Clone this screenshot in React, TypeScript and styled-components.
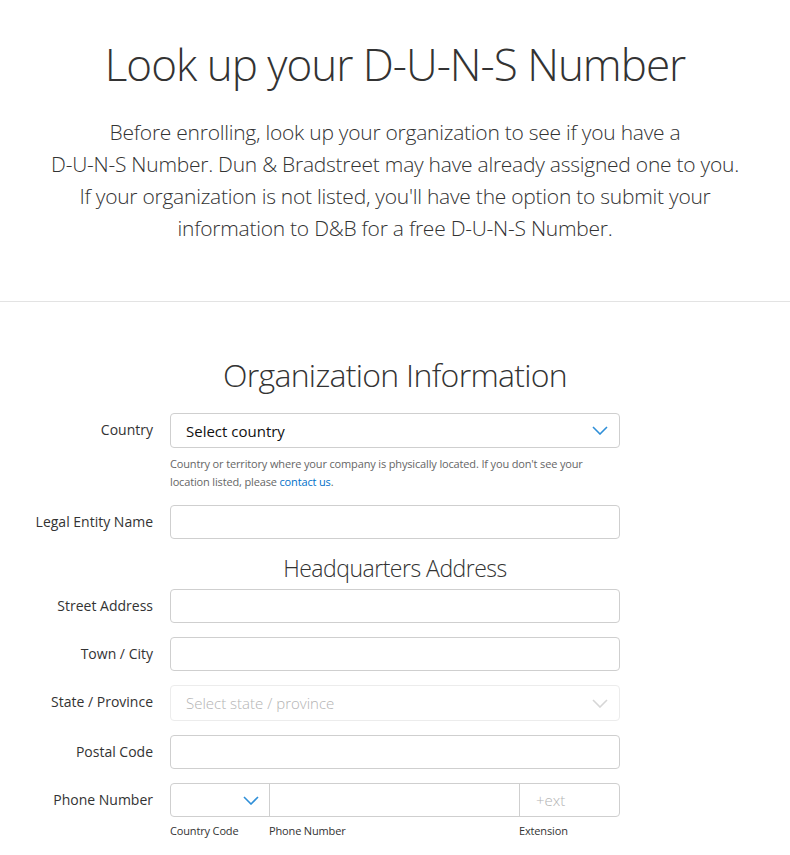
import React from "react"
import styled, { createGlobalStyle } from "styled-components"

const GlobalStyle = createGlobalStyle`
  body {
    margin: 0;
    background: #fff;
    font-family: "Open Sans", "Liberation Sans", sans-serif;
    color: #333;
  }
`

const Page = styled.div`
  width: 790px;
`

const Hero = styled.section`
  padding: 37px 0 57px;
  text-align: center;
  border-bottom: 1px solid #e3e3e3;
`

const Title = styled.h1`
  margin: 0;
  font-size: 44px;
  font-weight: 300;
  line-height: 54px;
  color: #333;
  letter-spacing: -1px;
`

const Intro = styled.p`
  margin: 25px 0 0;
  font-size: 21px;
  font-weight: 300;
  line-height: 32px;
  color: #333;
  letter-spacing: -0.25px;
`

const FormSection = styled.section`
  padding-top: 53px;
`

const SectionTitle = styled.h2<{ $small?: boolean }>`
  margin: 0;
  text-align: center;
  font-weight: 300;
  color: #333;
  font-size: ${(p) => (p.$small ? "23px" : "32px")};
  line-height: ${(p) => (p.$small ? "30px" : "40px")};
  letter-spacing: ${(p) => (p.$small ? "-0.5px" : "-0.7px")};
`

const Grid = styled.div`
  display: grid;
  grid-template-columns: 153px 450px;
  column-gap: 17px;
  row-gap: 14px;
  margin-top: 18px;
`

const Label = styled.label`
  justify-self: end;
  align-self: start;
  padding-top: 8px;
  font-size: 14px;
  line-height: 18px;
  color: #333;
  white-space: nowrap;
`

const Field = styled.div`
  display: flex;
  flex-direction: column;
`

const Input = styled.div<{ $disabled?: boolean; $tall?: boolean }>`
  box-sizing: border-box;
  height: ${(p) => (p.$disabled ? "36px" : p.$tall ? "35px" : "34px")};
  border: 1px solid ${(p) => (p.$disabled ? "#ececec" : "#cfcfcf")};
  border-radius: 4px;
  background: #fff;
  display: flex;
  align-items: center;
  padding: 0 11px 0 15px;
  font-size: 15px;
  color: ${(p) => (p.$disabled ? "#b3b3b3" : "#111")};
`

const Placeholder = styled.span<{ $light?: boolean }>`
  flex: 1;
  font-weight: ${(p) => (p.$light ? 300 : 400)};
`

const Help = styled.p`
  margin: 7px 0 0;
  font-size: 11px;
  line-height: 18px;
  color: #666;
  letter-spacing: -0.15px;
`

const Link = styled.a`
  color: #0070c9;
  text-decoration: none;
`

const SubHeading = styled.div`
  grid-column: 1 / span 2;
  margin: 0 0 -8px 170px;
  width: 450px;
`

const PhoneBox = styled.div`
  box-sizing: border-box;
  height: 34px;
  border: 1px solid #cfcfcf;
  border-radius: 4px;
  display: grid;
  grid-template-columns: 98px 250px 1fr;
`

const PhonePart = styled.div<{ $divider?: boolean; $start?: boolean }>`
  display: flex;
  align-items: center;
  justify-content: ${(p) => (p.$start ? "flex-start" : "flex-end")};
  padding: 0 10px 0 16px;
  border-left: ${(p) => (p.$divider ? "1px solid #cfcfcf" : "none")};
  font-size: 15px;
  font-weight: 300;
  color: #b3b3b3;
`

const SubLabels = styled.div`
  display: grid;
  grid-template-columns: 99px 250px 1fr;
  margin-top: 6px;
  font-size: 11px;
  line-height: 16px;
  color: #333;
  letter-spacing: -0.15px;
`

const Chevron = ({ color }: { color: string }) => (
  <svg width="16" height="9" viewBox="0 0 16 9" fill="none">
    <path d="M1 1l7 7 7-7" stroke={color} strokeWidth="1.6" />
  </svg>
)

const App = () => {
  return (
    <Page>
      <GlobalStyle />
      <Hero>
        <Title>Look up your D-U-N-S Number</Title>
        <Intro>
          Before enrolling, look up your organization to see if you have a
          <br />
          D-U-N-S Number. Dun &amp; Bradstreet may have already assigned one to you.
          <br />
          If your organization is not listed, you'll have the option to submit your
          <br />
          information to D&amp;B for a free D-U-N-S Number.
        </Intro>
      </Hero>
      <FormSection>
        <SectionTitle>Organization Information</SectionTitle>
        <Grid>
          <Label>Country</Label>
          <Field>
            <Input $tall>
              <Placeholder>Select country</Placeholder>
              <Chevron color="#2f8fd8" />
            </Input>
            <Help>
              Country or territory where your company is physically located. If you don't see your
              location listed, please <Link href="#">contact us</Link>.
            </Help>
          </Field>

          <Label>Legal Entity Name</Label>
          <Input />

          <SubHeading>
            <SectionTitle $small>Headquarters Address</SectionTitle>
          </SubHeading>

          <Label>Street Address</Label>
          <Input />

          <Label>Town / City</Label>
          <Input />

          <Label>State / Province</Label>
          <Input $disabled>
            <Placeholder $light>Select state / province</Placeholder>
            <Chevron color="#d6d6d6" />
          </Input>

          <Label>Postal Code</Label>
          <Input />

          <Label>Phone Number</Label>
          <Field>
            <PhoneBox>
              <PhonePart>
                <Chevron color="#2f8fd8" />
              </PhonePart>
              <PhonePart $divider />
              <PhonePart $divider $start>+ext</PhonePart>
            </PhoneBox>
            <SubLabels>
              <span>Country Code</span>
              <span>Phone Number</span>
              <span>Extension</span>
            </SubLabels>
          </Field>
        </Grid>
      </FormSection>
    </Page>
  )
}

export default App
